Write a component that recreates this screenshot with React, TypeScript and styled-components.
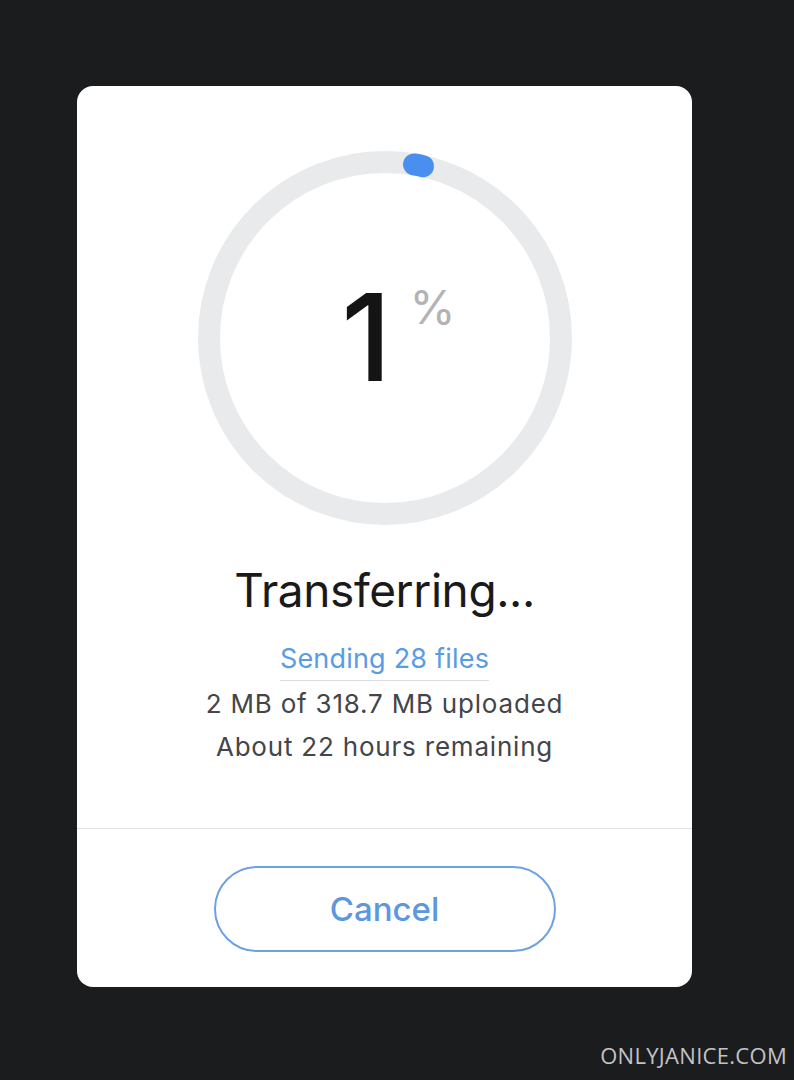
import React from "react";
import styled, { createGlobalStyle } from "styled-components";

const Global = createGlobalStyle`
  html, body { margin: 0; padding: 0; background: #1b1c1e; }
  body { font-family: Inter, "Noto Sans", "Liberation Sans", sans-serif; }
`;

const Page = styled.div`
  width: 794px;
  height: 1080px;
  background: #1b1c1e;
  display: flex;
  flex-direction: column;
  padding: 86px 0 0 77px;
  box-sizing: border-box;
  position: relative;
`;

const Card = styled.div`
  width: 615px;
  height: 901px;
  background: #ffffff;
  border-radius: 16px;
  display: flex;
  flex-direction: column;
  overflow: hidden;
`;

const Body = styled.div`
  height: 743px;
  display: flex;
  flex-direction: column;
  align-items: center;
  padding-top: 65px;
  box-sizing: border-box;
  border-bottom: 1.5px solid #dedfe1;
`;

const Dial = styled.div`
  display: grid;
  width: 374px;
  height: 374px;
  > * { grid-area: 1 / 1; }
`;

const Ring = styled.svg`
  width: 374px;
  height: 374px;
`;

const Readout = styled.div`
  display: flex;
  align-items: flex-start;
  justify-content: center;
  padding-top: 126px;
  padding-left: 28px;
  box-sizing: border-box;
`;

const Big = styled.span`
  font-size: 121px;
  line-height: 1;
  font-weight: 500;
  color: #141414;
  letter-spacing: -2px;
`;

const Pct = styled.span`
  font-size: 47px;
  line-height: 1;
  color: #b3b3b5;
  margin-left: 20px;
  margin-top: 6px;
`;

const Title = styled.div`
  margin-top: 37px;
  font-size: 46px;
  line-height: 56px;
  color: #1a1a1a;
  letter-spacing: -0.4px;
`;

const Link = styled.div`
  margin-top: 24px;
  font-size: 27px;
  line-height: 34px;
  color: #5a9be6;
  padding-bottom: 4px;
  letter-spacing: 0.2px;
  border-bottom: 1.5px solid #dcdde0;
`;

const Info = styled.div`
  font-size: 26px;
  line-height: 43px;
  color: #444548;
  text-align: center;
  letter-spacing: 0.8px;
  margin-top: 1px;
`;

const Footer = styled.div`
  flex: 1;
  display: flex;
  align-items: center;
  justify-content: center;
`;

const CancelButton = styled.button`
  width: 342px;
  height: 86px;
  border-radius: 43px;
  border: 2px solid #6ea1e2;
  background: #fff;
  color: #5c97e0;
  font-family: Inter, "Noto Sans", sans-serif;
  font-size: 33px;
  font-weight: 500;
  cursor: pointer;
  margin-top: 2px;
  padding: 0;
`;

const Watermark = styled.div`
  position: absolute;
  right: 7px;
  bottom: 10px;
  font-family: "Open Sans", "Noto Sans", sans-serif;
  font-size: 22px;
  color: #c2c3c5;
  letter-spacing: 0.3px;
`;

export default function App() {
  const r = 176;
  const cx = 187;
  const cy = 187;
  const a1 = (9.5 * Math.PI) / 180;
  const a2 = (12.5 * Math.PI) / 180;
  const p1 = [cx + r * Math.sin(a1), cy - r * Math.cos(a1)];
  const p2 = [cx + r * Math.sin(a2), cy - r * Math.cos(a2)];
  return (
    <>
      <Global />
      <Page>
        <Card>
          <Body>
            <Dial>
              <Ring viewBox="0 0 374 374">
                <circle cx={cx} cy={cy} r={r} fill="none" stroke="#e9eaec" strokeWidth={22} />
                <path
                  d={`M ${p1[0]} ${p1[1]} A ${r} ${r} 0 0 1 ${p2[0]} ${p2[1]}`}
                  fill="none"
                  stroke="#4a8ef0"
                  strokeWidth={22}
                  strokeLinecap="round"
                />
              </Ring>
              <Readout>
                <Big>1</Big>
                <Pct>%</Pct>
              </Readout>
            </Dial>
            <Title>Transferring...</Title>
            <Link>Sending 28 files</Link>
            <Info>
              2 MB of 318.7 MB uploaded
              <br />
              About 22 hours remaining
            </Info>
          </Body>
          <Footer>
            <CancelButton>Cancel</CancelButton>
          </Footer>
        </Card>
        <Watermark>ONLYJANICE.COM</Watermark>
      </Page>
    </>
  );
}
